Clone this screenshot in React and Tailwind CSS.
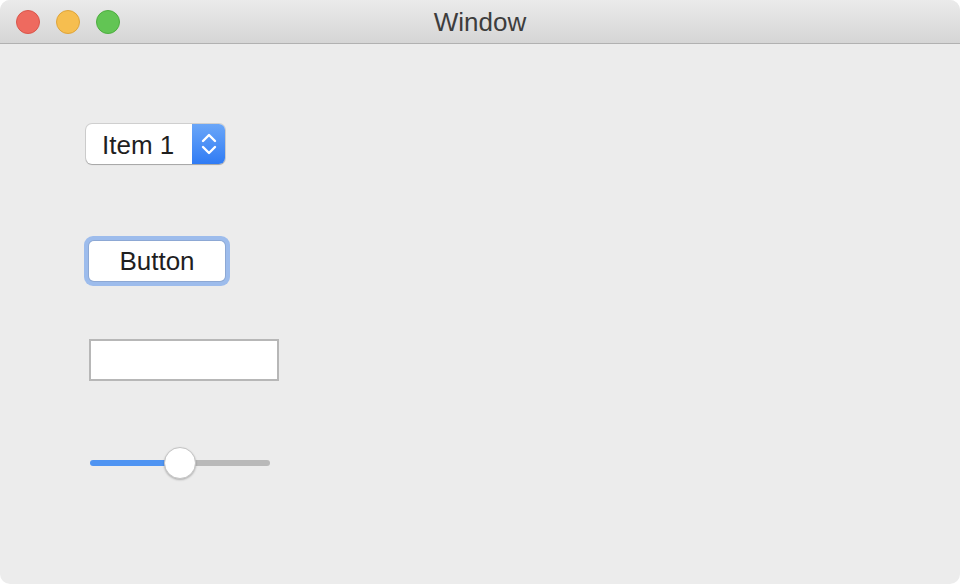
export default function App() {
  return (
    <div className="w-[960px] h-[584px] bg-white" style={{ fontFamily: '"Liberation Sans", Arial, sans-serif' }}>
      <div className="w-full h-full bg-[#ececec] rounded-[10px] overflow-hidden flex flex-col">
        {/* title bar */}
        <div className="h-[44px] shrink-0 bg-gradient-to-b from-[#ebebeb] to-[#d5d5d5] border-b border-[#b1b1b1] flex items-center relative">
          <div className="flex items-center gap-[16px] pl-[16px]">
            <span className="w-[24px] h-[24px] rounded-full bg-[#ee6a5f] border border-[#d9564b]" />
            <span className="w-[24px] h-[24px] rounded-full bg-[#f6be4f] border border-[#dea43a]" />
            <span className="w-[24px] h-[24px] rounded-full bg-[#62c554] border border-[#4dad3f]" />
          </div>
          <div className="absolute inset-0 pt-[2px] flex items-center justify-center text-[26px] text-[#3d3d3d] pointer-events-none">
            Window
          </div>
        </div>

        {/* content */}
        <div className="flex flex-col items-start">
          {/* popup */}
          <div className="mt-[80px] ml-[86px] h-[40px] w-[139px] flex rounded-[6px] bg-white shadow-[0_0_0_1px_rgba(0,0,0,0.12),0_1px_1px_rgba(0,0,0,0.2)] overflow-hidden">
            <div className="flex-1 flex items-center pl-[16px] pt-[2px] text-[26px] text-[#1f1f1f]">Item 1</div>
            <div className="w-[33px] bg-gradient-to-b from-[#6aa6f8] to-[#2f7bf4] flex items-center justify-center">
              <svg width="18" height="24" viewBox="0 0 18 24" fill="none" stroke="white" strokeWidth="2.4" strokeLinecap="round" strokeLinejoin="round">
                <path d="M3 9 L9 3 L15 9" />
                <path d="M3 15 L9 21 L15 15" />
              </svg>
            </div>
          </div>

          {/* button with focus ring */}
          <div className="mt-[72px] ml-[84px] p-[5px] rounded-[9px] bg-[#9dbcec]">
            <div className="w-[136px] h-[40px] rounded-[5px] bg-white shadow-[0_0_0_1px_rgba(0,0,0,0.1)] flex items-center justify-center pt-[1px] text-[26px] text-[#1f1f1f]">
              Button
            </div>
          </div>

          {/* text field */}
          <div className="mt-[53px] ml-[89px] w-[190px] h-[42px] bg-white border-2 border-[#b7b7b7]" />

          {/* slider */}
          <div className="mt-[66px] ml-[90px] w-[180px] h-[32px] relative flex items-center">
            <div className="flex w-full h-[6px] rounded-full overflow-hidden">
              <div className="w-[90px] bg-[#4f94f2]" />
              <div className="flex-1 bg-[#b9b9b9]" />
            </div>
            <div className="absolute left-[74px] top-0 w-[32px] h-[32px] rounded-full bg-white border border-[#c4c4c4] shadow-[0_1px_2px_rgba(0,0,0,0.25)]" />
          </div>
        </div>
      </div>
    </div>
  );
}
